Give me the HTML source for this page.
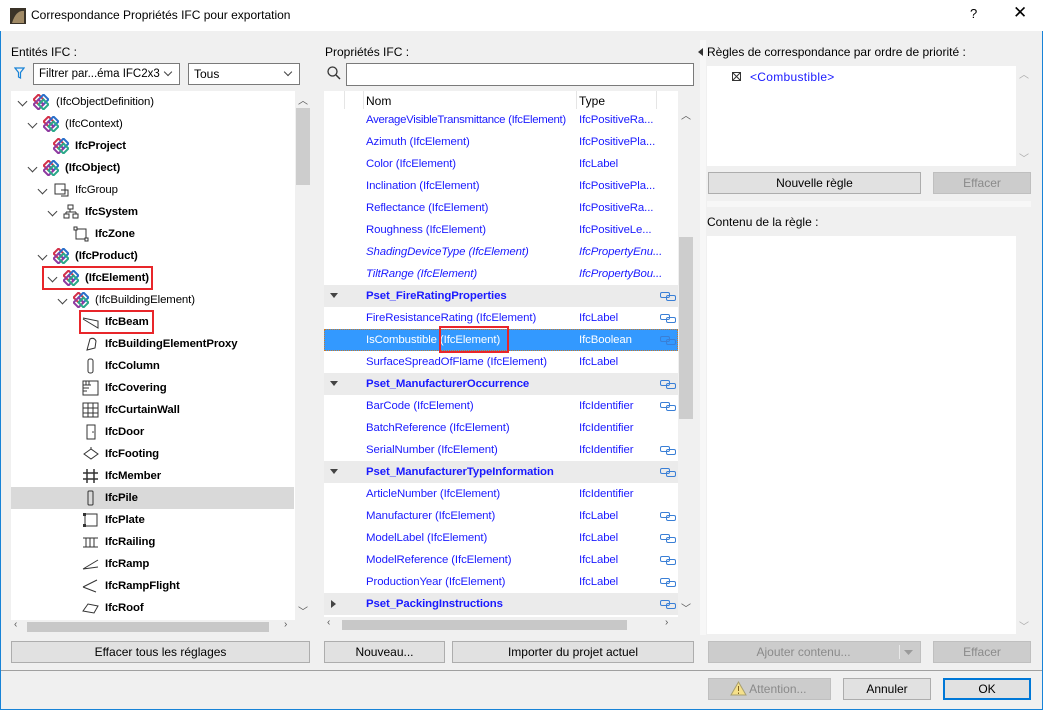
<!DOCTYPE html>
<html><head><meta charset="utf-8"><style>
*{box-sizing:border-box;margin:0;padding:0}
body{width:1043px;height:710px;background:#f0f0f0;font-family:"Liberation Sans",sans-serif;font-size:12px;color:#000;position:relative;overflow:hidden}
.a{position:absolute;white-space:nowrap}
.win{position:absolute;left:0;top:0;width:1043px;height:710px;border:1px solid #1883d7}
.btn{position:absolute;background:#e1e1e1;border:1px solid #adadad;text-align:center;line-height:20px}
.dis{background:#cccccc;border-color:#bfbfbf;color:#8a8a8a}
.white{position:absolute;background:#fff}
.sb{position:absolute;background:#f0f0f0}
.thumb{position:absolute;background:#cdcdcd}
.r{position:absolute;height:22px;line-height:22px;white-space:nowrap;font-size:11.4px;letter-spacing:-0.1px}
.b{font-weight:bold}
.blue{color:#1a1aff}
.chev{position:absolute;width:7px;height:7px;border-right:1.5px solid #444;border-bottom:1.5px solid #444;transform:rotate(45deg)}
</style></head><body>
<div class="win"></div>
<div class="a" style="left:0;top:0;width:1043px;height:31px;background:#fff"></div>
<svg class="a" style="left:10px;top:8px" width="16" height="16"><rect width="16" height="16" fill="#3a3328"/><path d="M2 15 Q6 2 14 3 L14 15Z" fill="#a08a66"/></svg>
<div class="a" style="left:31px;top:8px;font-size:12px">Correspondance Propriétés IFC pour exportation</div>
<div class="a" style="left:970px;top:6px;font-size:13px">?</div>
<div class="a" style="left:1013px;top:3px;font-size:17px">✕</div>

<!-- LEFT -->
<div class="a" style="left:11px;top:45px">Entités IFC :</div>
<svg class="a" style="left:14px;top:67px" width="11" height="12"><path d="M1 1 H10 L6.5 5.5 V11 L4.5 10 V5.5Z" fill="none" stroke="#1883d7" stroke-width="1.2"/></svg>
<div class="a" style="left:33px;top:63px;width:147px;height:22px;background:#fff;border:1px solid #7a7a7a;line-height:20px;padding-left:5px;font-size:11.5px">Filtrer par...éma IFC2x3</div>
<div class="chev" style="left:165px;top:69px;width:6px;height:6px;border-width:1px"></div>
<div class="a" style="left:188px;top:63px;width:112px;height:22px;background:#fff;border:1px solid #7a7a7a;line-height:20px;padding-left:5px">Tous</div>
<div class="chev" style="left:285px;top:69px;width:6px;height:6px;border-width:1px"></div>

<div class="white" style="left:11px;top:91px;width:284px;height:529px"></div>
<div class="sb" style="left:295px;top:91px;width:15px;height:529px"></div>
<div class="thumb" style="left:296px;top:108px;width:14px;height:77px"></div>
<div class="a" style="left:298px;top:92px;font-size:10px;color:#555">︿</div>
<div class="a" style="left:298px;top:603px;font-size:10px;color:#555">﹀</div>
<div class="sb" style="left:11px;top:620px;width:299px;height:14px"></div>
<div class="thumb" style="left:27px;top:622px;width:242px;height:10px;background:#c8c8c8"></div>
<div class="a" style="left:14px;top:619px;font-size:10px;color:#555">‹</div>
<div class="a" style="left:284px;top:619px;font-size:10px;color:#555">›</div>
<div class="a" style="left:11px;top:487px;width:283px;height:22px;background:#d9d9d9"></div>

<svg width="0" height="0" style="position:absolute"><defs>
<g id="ifc"><rect x="2" y="2" width="7" height="7" transform="rotate(45 5.5 5.5)" fill="none" stroke="#d2304a" stroke-width="2"/><rect x="7" y="2" width="7" height="7" transform="rotate(45 10.5 5.5)" fill="none" stroke="#2a6fc9" stroke-width="2"/><rect x="2" y="7" width="7" height="7" transform="rotate(45 5.5 10.5)" fill="none" stroke="#8e3aa0" stroke-width="2"/><rect x="7" y="7" width="7" height="7" transform="rotate(45 10.5 10.5)" fill="none" stroke="#2aa889" stroke-width="2"/></g>
<g id="lk"><rect x="0.5" y="0.5" width="9" height="5" rx="1.5" fill="none" stroke="#3a7fd6"/><rect x="6.5" y="3.5" width="9" height="5" rx="1.5" fill="none" stroke="#3a7fd6"/></g>
</defs></svg>

<div class="chev" style="left:19px;top:98px"></div><svg class="a" style="left:33px;top:94px" width="16" height="16"><use href="#ifc"/></svg><div class="r" style="left:56px;top:91px">(IfcObjectDefinition)</div>
<div class="chev" style="left:29px;top:120px"></div><svg class="a" style="left:43px;top:116px" width="16" height="16"><use href="#ifc"/></svg><div class="r" style="left:65px;top:113px">(IfcContext)</div>
<svg class="a" style="left:53px;top:138px" width="16" height="16"><use href="#ifc"/></svg><div class="r b" style="left:75px;top:135px">IfcProject</div>
<div class="chev" style="left:29px;top:164px"></div><svg class="a" style="left:43px;top:160px" width="16" height="16"><use href="#ifc"/></svg><div class="r b" style="left:65px;top:157px">(IfcObject)</div>
<div class="chev" style="left:39px;top:186px"></div><svg class="a" style="left:53px;top:182px" width="16" height="16"><rect x="2" y="2" width="10" height="10" fill="none" stroke="#333"/><path d="M8 8 L15 8 L15 14 L8 14" fill="none" stroke="#333"/></svg><div class="r" style="left:75px;top:179px">IfcGroup</div>
<div class="chev" style="left:49px;top:208px"></div><svg class="a" style="left:63px;top:204px" width="16" height="16"><rect x="5" y="1" width="5" height="4" fill="none" stroke="#333"/><rect x="1" y="10" width="5" height="4" fill="none" stroke="#333"/><rect x="10" y="10" width="5" height="4" fill="none" stroke="#333"/><path d="M7 5V8M3 8H13M3 8V10M13 8V10" stroke="#333" fill="none"/></svg><div class="r b" style="left:85px;top:201px">IfcSystem</div>
<svg class="a" style="left:73px;top:226px" width="16" height="16"><rect x="3" y="3" width="10" height="10" fill="none" stroke="#333"/><rect x="1" y="1" width="3" height="3" fill="#fff" stroke="#333"/><rect x="12" y="12" width="3" height="3" fill="#fff" stroke="#333"/></svg><div class="r b" style="left:95px;top:223px">IfcZone</div>
<div class="chev" style="left:39px;top:252px"></div><svg class="a" style="left:53px;top:248px" width="16" height="16"><use href="#ifc"/></svg><div class="r b" style="left:75px;top:245px">(IfcProduct)</div>
<div class="chev" style="left:49px;top:274px"></div><svg class="a" style="left:63px;top:270px" width="16" height="16"><use href="#ifc"/></svg><div class="r b" style="left:85px;top:267px">(IfcElement)</div>
<div class="a" style="left:42px;top:266px;width:111px;height:24px;border:2px solid #e8262a"></div>
<div class="chev" style="left:59px;top:296px"></div><svg class="a" style="left:73px;top:292px" width="16" height="16"><use href="#ifc"/></svg><div class="r" style="left:95px;top:289px">(IfcBuildingElement)</div>
<div class="a" style="left:79px;top:310px;width:75px;height:24px;border:2px solid #e8262a"></div>
<svg class="a" style="left:82px;top:314px" width="18" height="16"><path d="M1 4 L16 7 L16 14 L1 5" fill="none" stroke="#333"/></svg><div class="r b" style="left:105px;top:311px">IfcBeam</div>
<svg class="a" style="left:82px;top:336px" width="18" height="16"><path d="M5 14 L8 3 Q12 1 14 5 L13 12Z M8 3 L5 14" fill="none" stroke="#333"/></svg><div class="r b" style="left:105px;top:333px">IfcBuildingElementProxy</div>
<svg class="a" style="left:82px;top:358px" width="18" height="16"><rect x="6" y="1" width="5" height="14" rx="2" fill="none" stroke="#333"/></svg><div class="r b" style="left:105px;top:355px">IfcColumn</div>
<svg class="a" style="left:82px;top:380px" width="18" height="16"><rect x="1" y="1" width="15" height="14" fill="none" stroke="#333"/><path d="M1 5H9M1 8H7M1 11H5M4 1V5M7 1V5" stroke="#333"/></svg><div class="r b" style="left:105px;top:377px">IfcCovering</div>
<svg class="a" style="left:82px;top:402px" width="18" height="16"><rect x="1" y="1" width="15" height="14" fill="none" stroke="#333"/><path d="M1 6H16M1 11H16M6 1V15M11 1V15" stroke="#333"/></svg><div class="r b" style="left:105px;top:399px">IfcCurtainWall</div>
<svg class="a" style="left:82px;top:424px" width="18" height="16"><rect x="5" y="1" width="8" height="14" fill="none" stroke="#333"/><circle cx="11" cy="8" r="0.8" fill="#333"/></svg><div class="r b" style="left:105px;top:421px">IfcDoor</div>
<svg class="a" style="left:82px;top:446px" width="18" height="16"><path d="M2 8 L9 3 L16 8 L9 13Z M9 3V1" fill="none" stroke="#333"/></svg><div class="r b" style="left:105px;top:443px">IfcFooting</div>
<svg class="a" style="left:82px;top:468px" width="18" height="16"><path d="M5 1V15M12 1V15M1 5H16M1 11H16" stroke="#333" stroke-width="1.5"/></svg><div class="r b" style="left:105px;top:465px">IfcMember</div>
<svg class="a" style="left:82px;top:490px" width="18" height="16"><rect x="6" y="1" width="5" height="14" rx="1" fill="none" stroke="#333"/></svg><div class="r b" style="left:105px;top:487px">IfcPile</div>
<svg class="a" style="left:82px;top:512px" width="18" height="16"><rect x="3" y="2" width="12" height="12" fill="none" stroke="#333"/><rect x="1" y="1" width="3" height="3" fill="#333"/><rect x="1" y="12" width="3" height="3" fill="#333"/></svg><div class="r b" style="left:105px;top:509px">IfcPlate</div>
<svg class="a" style="left:82px;top:534px" width="18" height="16"><path d="M1 4H16M1 13H16M4 4V13M8 4V13M12 4V13" stroke="#333"/></svg><div class="r b" style="left:105px;top:531px">IfcRailing</div>
<svg class="a" style="left:82px;top:556px" width="18" height="16"><path d="M1 13 L16 4 M1 13 L16 11" stroke="#333" fill="none"/></svg><div class="r b" style="left:105px;top:553px">IfcRamp</div>
<svg class="a" style="left:82px;top:578px" width="18" height="16"><path d="M1 9 L15 2 M1 9 L14 14" stroke="#333" fill="none"/></svg><div class="r b" style="left:105px;top:575px">IfcRampFlight</div>
<svg class="a" style="left:82px;top:600px" width="18" height="16"><path d="M1 11 L6 4 L16 6 L12 13Z" stroke="#333" fill="none"/></svg><div class="r b" style="left:105px;top:597px">IfcRoof</div>

<div class="btn" style="left:11px;top:641px;width:299px;height:22px">Effacer tous les réglages</div>

<!-- MIDDLE -->
<div class="a" style="left:325px;top:45px">Propriétés IFC :</div>
<svg class="a" style="left:327px;top:66px" width="14" height="14"><circle cx="5.5" cy="5.5" r="4.5" fill="none" stroke="#333" stroke-width="1.3"/><path d="M9 9L13 13" stroke="#333" stroke-width="1.5"/></svg>
<div class="a" style="left:346px;top:63px;width:348px;height:23px;background:#fff;border:1px solid #7a7a7a"></div>
<div class="white" style="left:324px;top:91px;width:354px;height:526px"></div>
<div class="sb" style="left:678px;top:91px;width:16px;height:526px"></div>
<div class="thumb" style="left:679px;top:237px;width:14px;height:182px"></div>
<div class="a" style="left:681px;top:107px;font-size:10px;color:#555">︿</div>
<div class="a" style="left:681px;top:600px;font-size:10px;color:#555">﹀</div>
<div class="sb" style="left:324px;top:617px;width:370px;height:16px"></div>
<div class="thumb" style="left:342px;top:620px;width:285px;height:10px;background:#c8c8c8"></div>
<div class="a" style="left:327px;top:617px;font-size:10px;color:#555">‹</div>
<div class="a" style="left:665px;top:617px;font-size:10px;color:#555">›</div>
<div class="a" style="left:344px;top:91px;width:1px;height:18px;background:#e5e5e5"></div>
<div class="a" style="left:363px;top:91px;width:1px;height:18px;background:#e5e5e5"></div>
<div class="a" style="left:576px;top:91px;width:1px;height:18px;background:#e5e5e5"></div>
<div class="a" style="left:656px;top:91px;width:1px;height:18px;background:#e5e5e5"></div>
<div class="a" style="left:366px;top:94px">Nom</div>
<div class="a" style="left:579px;top:94px">Type</div>

<div style="position:absolute;left:0;top:0" class="blue">
<div class="r" style="left:366px;top:109px;letter-spacing:-0.3px">AverageVisibleTransmittance (IfcElement)</div><div class="r" style="left:579px;top:109px">IfcPositiveRa...</div>
<div class="r" style="left:366px;top:131px">Azimuth (IfcElement)</div><div class="r" style="left:579px;top:131px">IfcPositivePla...</div>
<div class="r" style="left:366px;top:153px">Color (IfcElement)</div><div class="r" style="left:579px;top:153px">IfcLabel</div>
<div class="r" style="left:366px;top:175px">Inclination (IfcElement)</div><div class="r" style="left:579px;top:175px">IfcPositivePla...</div>
<div class="r" style="left:366px;top:197px">Reflectance (IfcElement)</div><div class="r" style="left:579px;top:197px">IfcPositiveRa...</div>
<div class="r" style="left:366px;top:219px">Roughness (IfcElement)</div><div class="r" style="left:579px;top:219px">IfcPositiveLe...</div>
<div class="r" style="left:366px;top:241px;font-style:italic">ShadingDeviceType (IfcElement)</div><div class="r" style="left:579px;top:241px;font-style:italic">IfcPropertyEnu...</div>
<div class="r" style="left:366px;top:263px;font-style:italic">TiltRange (IfcElement)</div><div class="r" style="left:579px;top:263px;font-style:italic">IfcPropertyBou...</div>
</div>
<div class="a" style="left:324px;top:285px;width:354px;height:22px;background:#ebebeb"></div>
<div class="r b blue" style="left:366px;top:285px">Pset_FireRatingProperties</div>
<div class="r blue" style="left:366px;top:307px">FireResistanceRating (IfcElement)</div><div class="r blue" style="left:579px;top:307px">IfcLabel</div>
<div class="a" style="left:324px;top:329px;width:354px;height:22px;background:#3399ff;border:1px dotted #c87a2a"></div>
<div class="r" style="left:366px;top:329px;color:#fff">IsCombustible (IfcElement)</div><div class="r" style="left:579px;top:329px;color:#fff">IfcBoolean</div>
<div class="a" style="left:439px;top:326px;width:70px;height:27px;border:2px solid #e8262a"></div>
<div class="r blue" style="left:366px;top:351px">SurfaceSpreadOfFlame (IfcElement)</div><div class="r blue" style="left:579px;top:351px">IfcLabel</div>
<div class="a" style="left:324px;top:373px;width:354px;height:22px;background:#ebebeb"></div>
<div class="r b blue" style="left:366px;top:373px">Pset_ManufacturerOccurrence</div>
<div class="r blue" style="left:366px;top:395px">BarCode (IfcElement)</div><div class="r blue" style="left:579px;top:395px">IfcIdentifier</div>
<div class="r blue" style="left:366px;top:417px">BatchReference (IfcElement)</div><div class="r blue" style="left:579px;top:417px">IfcIdentifier</div>
<div class="r blue" style="left:366px;top:439px">SerialNumber (IfcElement)</div><div class="r blue" style="left:579px;top:439px">IfcIdentifier</div>
<div class="a" style="left:324px;top:461px;width:354px;height:22px;background:#ebebeb"></div>
<div class="r b blue" style="left:366px;top:461px">Pset_ManufacturerTypeInformation</div>
<div class="r blue" style="left:366px;top:483px">ArticleNumber (IfcElement)</div><div class="r blue" style="left:579px;top:483px">IfcIdentifier</div>
<div class="r blue" style="left:366px;top:505px">Manufacturer (IfcElement)</div><div class="r blue" style="left:579px;top:505px">IfcLabel</div>
<div class="r blue" style="left:366px;top:527px">ModelLabel (IfcElement)</div><div class="r blue" style="left:579px;top:527px">IfcLabel</div>
<div class="r blue" style="left:366px;top:549px">ModelReference (IfcElement)</div><div class="r blue" style="left:579px;top:549px">IfcLabel</div>
<div class="r blue" style="left:366px;top:571px">ProductionYear (IfcElement)</div><div class="r blue" style="left:579px;top:571px">IfcLabel</div>
<div class="a" style="left:324px;top:593px;width:354px;height:22px;background:#ebebeb"></div>
<div class="r b blue" style="left:366px;top:593px">Pset_PackingInstructions</div>
<svg class="a" style="left:330px;top:293px" width="8" height="6"><path d="M0 0H8L4 5Z" fill="#444"/></svg>
<svg class="a" style="left:330px;top:381px" width="8" height="6"><path d="M0 0H8L4 5Z" fill="#444"/></svg>
<svg class="a" style="left:330px;top:469px" width="8" height="6"><path d="M0 0H8L4 5Z" fill="#444"/></svg>
<svg class="a" style="left:331px;top:600px" width="6" height="8"><path d="M0 0V8L5 4Z" fill="#444"/></svg>
<svg class="a" style="left:660px;top:292px" width="17" height="10"><use href="#lk"/></svg>
<svg class="a" style="left:660px;top:314px" width="17" height="10"><use href="#lk"/></svg>
<svg class="a" style="left:660px;top:336px" width="17" height="10"><use href="#lk"/></svg>
<svg class="a" style="left:660px;top:380px" width="17" height="10"><use href="#lk"/></svg>
<svg class="a" style="left:660px;top:402px" width="17" height="10"><use href="#lk"/></svg>
<svg class="a" style="left:660px;top:446px" width="17" height="10"><use href="#lk"/></svg>
<svg class="a" style="left:660px;top:468px" width="17" height="10"><use href="#lk"/></svg>
<svg class="a" style="left:660px;top:512px" width="17" height="10"><use href="#lk"/></svg>
<svg class="a" style="left:660px;top:534px" width="17" height="10"><use href="#lk"/></svg>
<svg class="a" style="left:660px;top:556px" width="17" height="10"><use href="#lk"/></svg>
<svg class="a" style="left:660px;top:578px" width="17" height="10"><use href="#lk"/></svg>
<svg class="a" style="left:660px;top:600px" width="17" height="10"><use href="#lk"/></svg>

<div class="btn" style="left:324px;top:641px;width:121px;height:22px">Nouveau...</div>
<div class="btn" style="left:452px;top:641px;width:242px;height:22px">Importer du projet actuel</div>

<!-- RIGHT -->
<div class="a" style="left:700px;top:40px;width:6px;height:595px;background:#f7f7f7"></div>
<svg class="a" style="left:698px;top:48px" width="5" height="8"><path d="M5 0V8L0 4Z" fill="#333"/></svg>
<div class="a" style="left:707px;top:45px">Règles de correspondance par ordre de priorité :</div>
<div class="white" style="left:707px;top:66px;width:309px;height:100px"></div>
<div class="a" style="left:1019px;top:66px;font-size:10px;color:#aaa">︿</div>
<div class="a" style="left:1019px;top:150px;font-size:10px;color:#aaa">﹀</div>
<svg class="a" style="left:732px;top:72px" width="10" height="10"><rect x="0.5" y="0.5" width="8" height="8" fill="none" stroke="#333"/><path d="M1 1L8 8M8 1L1 8" stroke="#333"/></svg>
<div class="a blue" style="left:750px;top:70px;letter-spacing:0.3px">&lt;Combustible&gt;</div>
<div class="btn" style="left:708px;top:172px;width:213px;height:22px">Nouvelle règle</div>
<div class="btn dis" style="left:933px;top:172px;width:98px;height:22px">Effacer</div>
<div class="a" style="left:707px;top:201px;width:324px;height:6px;background:#f7f7f7"></div>
<div class="a" style="left:707px;top:215px">Contenu de la règle :</div>
<div class="white" style="left:707px;top:236px;width:309px;height:398px"></div>
<div class="a" style="left:1019px;top:618px;font-size:10px;color:#aaa">﹀</div>
<div class="btn dis" style="left:708px;top:641px;width:213px;height:22px"><span style="margin-right:22px">Ajouter contenu...</span></div>
<div class="a" style="left:899px;top:645px;width:1px;height:14px;background:#e8e8e8"></div>
<svg class="a" style="left:904px;top:650px" width="9" height="5"><path d="M0 0H9L4.5 5Z" fill="#9a9a9a"/></svg>
<div class="btn dis" style="left:933px;top:641px;width:98px;height:22px">Effacer</div>

<div class="a" style="left:1px;top:670px;width:1041px;height:1px;background:#a0a0a0"></div>
<div class="btn dis" style="left:708px;top:678px;width:123px;height:22px">&nbsp;&nbsp;&nbsp;&nbsp;&nbsp;Attention...</div>
<svg class="a" style="left:730px;top:681px" width="17" height="15"><path d="M8.5 1L16 14H1Z" fill="#f5e08a" stroke="#a8a070"/><path d="M8.5 5V10M8.5 11.5V13" stroke="#806020"/></svg>
<div class="btn" style="left:843px;top:678px;width:88px;height:22px">Annuler</div>
<div class="btn" style="left:943px;top:678px;width:88px;height:22px;border:2px solid #0078d7;line-height:18px">OK</div>
</body></html>
